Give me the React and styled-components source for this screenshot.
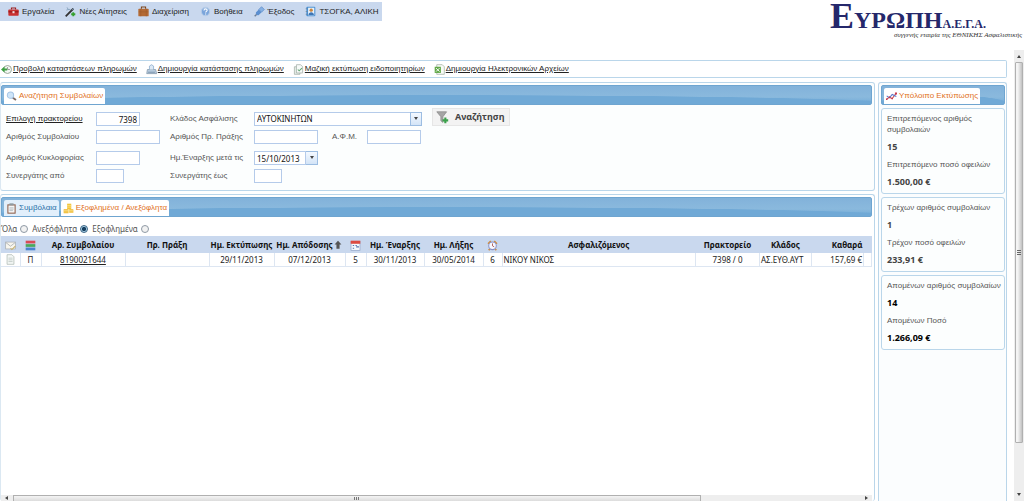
import React, { useState } from 'react';
import styled, { createGlobalStyle } from 'styled-components';

const GlobalStyle = createGlobalStyle`
  * {
    box-sizing: border-box;
  }
  body {
    margin: 0;
    background: #ffffff;
    color: #444444;
    font-family: 'Liberation Sans', Arial, sans-serif;
    font-size: 8px;
    line-height: 12px;
  }
  input, select, button {
    font: inherit;
    color: inherit;
  }
`;

const Page = styled.div`
  height: 100vh;
  display: flex;
  flex-direction: column;
  overflow: hidden;
`;

const Header = styled.header`
  height: 50px;
  flex: none;
  display: flex;
  justify-content: space-between;
  align-items: flex-start;
`;

const Menu = styled.nav`
  display: flex;
  align-items: center;
  gap: 11px;
  height: 19px;
  margin-top: 2px;
  padding: 0 3px 0 8px;
  background: #c9d8ee;
`;

const MenuItem = styled.a`
  display: flex;
  align-items: center;
  gap: 3px;
  color: #222222;
  text-decoration: none;
  white-space: nowrap;
`;

const Brand = styled.div`
  padding-right: 2px;
  color: #25286b;
  font-family: 'Liberation Serif', serif;
  text-align: right;
  white-space: nowrap;
`;

const BrandName = styled.div`
  display: flex;
  align-items: baseline;
  justify-content: flex-end;
  height: 29px;
  padding-right: 36px;
  font-size: 24px;
  font-weight: bold;
  line-height: 28px;
`;

const BrandInitial = styled.span`
  font-size: 36px;
  line-height: 32px;
`;

const BrandSuffix = styled.span`
  font-size: 12px;
`;

const Tagline = styled.div`
  color: #333333;
  font-size: 7px;
  font-style: italic;
  line-height: 12px;
`;

const Body = styled.div`
  flex: 1;
  min-height: 0;
  display: flex;
`;

const Content = styled.main`
  flex: 1;
  min-width: 0;
  display: flex;
  flex-direction: column;
  gap: 4px;
  padding: 10px 7px 0 0;
`;

const Toolbar = styled.div`
  height: 18px;
  flex: none;
  display: flex;
  align-items: center;
  gap: 9px;
  padding-left: 1px;
  border: 1px solid #bad6ea;
  border-left: none;
  border-radius: 0 2px 2px 0;
`;

const ToolLink = styled.a`
  display: flex;
  align-items: center;
  gap: 1px;
  color: #222222;
  white-space: nowrap;
`;

const Columns = styled.div`
  flex: 1;
  min-height: 0;
  display: flex;
  gap: 3px;
`;

const Main = styled.div`
  flex: 1;
  min-width: 0;
  display: flex;
  flex-direction: column;
  gap: 3px;
`;

const Panel = styled.section`
  display: flex;
  flex-direction: column;
  flex: ${props => (props.$fill ? '1' : 'none')};
  min-height: 0;
  padding: 2px 2px 0 0;
  border: 1px solid #bad6ea;
  border-left-color: #dbe8f2;
  border-bottom-width: ${props => (props.$fill ? '0' : '1px')};
  border-radius: 3px;
  background: ${props => props.$tint || '#ffffff'};
`;

const TabBar = styled.div`
  flex: none;
  display: flex;
  align-items: flex-end;
  gap: 2px;
  height: 20px;
  padding-left: 2px;
  border: 1px solid #6fa5d0;
  border-radius: 2px;
  background: radial-gradient(ellipse 55% 50% at 50% 100%, #70a9d6 95%, transparent 100%),
    linear-gradient(#82b2da, #8ab9dd 60%, #72abd7);
`;

const Tab = styled.button`
  display: flex;
  align-items: center;
  gap: 2px;
  height: 16px;
  padding: 0 2px;
  border: none;
  border-radius: 2px 2px 0 0;
  background: ${props => (props.$active ? '#ffffff' : '#e2effb')};
  color: ${props => (props.$active ? '#e17123' : '#2a6fa8')};
  white-space: nowrap;
`;

const Form = styled.form`
  display: flex;
  flex-direction: column;
  gap: 7px;
  padding: 7px 0 7px 5px;
`;

const FieldRows = styled.div`
  display: grid;
  grid-template-columns: 90px 74px 84px 78px 35px 65px auto;
  grid-auto-rows: 14px;
  row-gap: 4px;
  justify-content: start;
  align-items: center;
`;

const Label = styled.label`
  white-space: nowrap;
  color: ${props => (props.$link ? '#222222' : '#555555')};
  text-decoration: ${props => (props.$link ? 'underline' : 'none')};
`;

const Input = styled.input`
  width: ${props => props.$width}px;
  height: 14px;
  padding: 0 2px;
  border: 1px solid #b5cbea;
  border-radius: 0;
  background: #ffffff;
  color: #111111;
  font-family: 'Noto Sans', sans-serif;
  text-align: ${props => props.$align || 'left'};
  outline: none;
`;

const SelectBox = styled.div`
  position: relative;
  grid-column: 4 / 7;
  width: 168px;
  height: 14px;
`;

const Select = styled.select`
  display: block;
  width: 100%;
  height: 14px;
  padding: 0 2px;
  appearance: none;
  border: 1px solid #b5cbea;
  border-radius: 0;
  background: #ffffff;
  color: #111111;
  font-family: 'Noto Sans', sans-serif;
`;

const Arrow = styled.span`
  position: absolute;
  top: 0;
  right: 0;
  width: 12px;
  height: 14px;
  display: flex;
  align-items: center;
  justify-content: center;
  border: 1px solid #9cbde2;
  background: linear-gradient(#f4f9ff, #d3e4f7);
  pointer-events: none;
`;

const DateBox = styled.div`
  display: flex;
`;

const DateButton = styled.button`
  width: 12px;
  height: 14px;
  display: flex;
  align-items: center;
  justify-content: center;
  padding: 0;
  border: 1px solid #9cbde2;
  border-left: none;
  background: linear-gradient(#f4f9ff, #d3e4f7);
`;

const SearchButton = styled.button`
  display: flex;
  align-items: center;
  align-self: end;
  gap: 6px;
  height: 18px;
  padding: 0 5px 0 3px;
  border: 1px solid #e6e6e6;
  background: #f3f3f3;
  color: #444444;
  font-family: 'Noto Sans', sans-serif;
  font-size: 9px;
  font-weight: bold;
`;

const Filters = styled.div`
  flex: none;
  display: flex;
  align-items: center;
  gap: 4px;
  height: 12px;
  margin: 6px 0 1px;
  font-family: 'Noto Sans', sans-serif;
`;

const Option = styled.label`
  display: flex;
  align-items: center;
  gap: 3px;
  color: #555555;
  white-space: nowrap;
`;

const Radio = styled.input`
  width: 8px;
  height: 8px;
  margin: 0;
  appearance: none;
  border: 1px solid #8f9aa5;
  border-radius: 50%;
  background: #f2f2f2;

  &:checked {
    border-color: #3c6484;
    background: radial-gradient(circle, #173f5f 40%, #a9d0e8 60%);
  }
`;

const Table = styled.table`
  width: 100%;
  flex: none;
  table-layout: fixed;
  border-collapse: collapse;
  color: #222222;
  font-family: 'Noto Sans', sans-serif;
`;

const Th = styled.th`
  height: 17px;
  padding: 0 1px;
  overflow: hidden;
  background: #c9d8ee;
  color: #111111;
  font-size: 8px;
  text-align: ${props => props.$align || 'center'};
  white-space: nowrap;

  svg {
    vertical-align: middle;
  }
`;

const Td = styled.td`
  height: 13px;
  padding: 0 1px;
  overflow: hidden;
  border-right: 1px solid #dde6f2;
  border-bottom: 1px solid #dde6f2;
  line-height: 11px;
  text-align: ${props => props.$align || 'center'};
  white-space: nowrap;

  a {
    color: #222222;
  }
  svg {
    display: block;
    margin: 0 auto;
  }
`;

const Spacer = styled.div`
  flex: 1;
`;

const Side = styled.aside`
  width: 129px;
  flex: none;
  display: flex;
  flex-direction: column;
  gap: 3px;
  padding: 2px 1px 0 2px;
  border: 1px solid #bad6ea;
  border-bottom: none;
  border-radius: 3px 3px 0 0;
  background: #fbfdfe;
`;

const Card = styled.dl`
  margin: 0;
  padding: 4px 3px 5px 5px;
  border: 1px solid #bad6ea;
  border-radius: 3px;
  background: #fcfefe;
`;

const Term = styled.dt`
  margin-bottom: 6px;
  color: #555555;
  line-height: 11px;
`;

const Value = styled.dd`
  margin: 0 0 6px;
  color: ${props => (props.$dark ? '#000000' : '#444444')};
  font-family: 'Noto Sans', sans-serif;
  font-size: 9px;
  font-weight: bold;

  &:last-child {
    margin-bottom: 0;
  }
`;

const VScroll = styled.div`
  width: 10px;
  flex: none;
  display: flex;
  flex-direction: column;
  align-items: center;
  background: #eeeeee;
`;

const VThumb = styled.div`
  width: 8px;
  flex: 381;
  display: flex;
  align-items: center;
  justify-content: center;
  border: 1px solid #b0b0b0;
  border-radius: 1px;
  background: linear-gradient(90deg, #f4f4f4 30%, #c2c2c2);
`;

const VRest = styled.div`
  flex: 46;
`;

const ScrollEnd = styled.div`
  flex: none;
  height: ${props => props.$height || 12}px;
  width: 12px;
  display: flex;
  align-items: center;
  justify-content: center;
`;

const HScroll = styled.div`
  flex: none;
  display: flex;
  height: 6px;
  overflow: hidden;
  background: #eeeeee;
`;

const HThumb = styled.div`
  flex: 688;
  display: flex;
  align-items: center;
  justify-content: center;
  border: 1px solid #b0b0b0;
  border-bottom: none;
  background: linear-gradient(#f4f4f4, #dcdcdc);
`;

const HRest = styled.div`
  flex: 160;
`;

const Triangle = ({ points = '1,0 5,0 3,3' }) => (
  <svg width="6" height="4" viewBox="0 0 6 4">
    <polygon points={points} fill="#444444" />
  </svg>
);

const drawings = {
  toolbox: (
    <>
      <path d="M5 5V3h6v2" fill="none" stroke="#9b1c1c" strokeWidth="1.6" />
      <rect x="0.5" y="5" width="15" height="9" rx="1" fill="#c93131" />
      <path d="M0.5 8.5h15" stroke="#8b1313" strokeWidth="1.4" />
      <rect x="6.5" y="7.5" width="3" height="3" fill="#f3dede" />
    </>
  ),
  wand: (
    <>
      <path d="M1 15L12 4" stroke="#333333" strokeWidth="2.6" />
      <path d="M10 6l3-3M3 2l1.5 3L8 5M2 6l3-1" stroke="#7f9db8" strokeWidth="1.2" fill="none" />
      <path d="M12 9v6M9 12h6" stroke="#35a02e" strokeWidth="2.6" />
    </>
  ),
  briefcase: (
    <>
      <path d="M5 4V1.5h6V4" fill="none" stroke="#7c451c" strokeWidth="1.6" />
      <rect x="0.5" y="4" width="15" height="11" rx="1" fill="#b36a35" />
      <path d="M1 8.5h14M4 4v11M12 4v11" stroke="#9a5a2a" strokeWidth="0.8" />
    </>
  ),
  help: (
    <>
      <circle cx="8" cy="8" r="6" fill="#7ba5db" stroke="#b4cbe8" strokeWidth="1.5" />
      <path d="M5.8 6.5c0-3 4.6-3 4.6-.3 0 1.6-2.2 1.5-2.2 3.3M8.2 11v1.5" fill="none" stroke="#ffffff" strokeWidth="1.6" />
    </>
  ),
  exit: (
    <>
      <path d="M1 15l3-3" stroke="#6a7d95" strokeWidth="2" />
      <path d="M3 9l4-4 4 4-4 4c-2 1.5-5.5-2-4-4z" fill="#5b8fd0" />
      <path d="M7 5l4-4 4 4-4 4z" fill="#86b1e4" stroke="#5c89c4" />
    </>
  ),
  user: (
    <>
      <rect x="2" y="1" width="13" height="14" rx="1.5" fill="#4b90d2" />
      <rect x="4.5" y="2.5" width="9" height="11" fill="#e8f2fb" />
      <circle cx="9" cy="6" r="2.4" fill="#c9863f" />
      <path d="M5 13c0-5 8-5 8 0z" fill="#3f76b5" />
      <path d="M1 4h2.5M1 8h2.5M1 12h2.5" stroke="#6f7f8f" />
    </>
  ),
  back: (
    <>
      <circle cx="9.5" cy="8" r="5.8" fill="#f3f7f3" stroke="#97a797" strokeWidth="1.4" />
      <path d="M9.5 4.5V8H13" stroke="#777777" fill="none" />
      <path d="M0 8l5-4.5v3h4v3H5v3z" fill="#3fa044" />
    </>
  ),
  pay: (
    <>
      <path d="M2 8h12l1.5 6H1z" fill="#b5c9dc" stroke="#7d93a8" />
      <path d="M5 8V3l3-2 3 2v5" fill="#dce9f5" stroke="#7fa2c6" />
      <path d="M3 12h10" stroke="#66809a" />
    </>
  ),
  pages: (
    <>
      <path d="M2 4h8v11H2z" fill="#e7eee9" stroke="#9aa8a0" />
      <path d="M5 1h6l3 3v9H5z" fill="#f7faf8" stroke="#9aa8a0" />
      <path d="M7 8l2 2 4-4" stroke="#62a773" strokeWidth="1.5" fill="none" />
    </>
  ),
  sheet: (
    <>
      <path d="M4 1h8l3 3v11H4z" fill="#f8fbf7" stroke="#9ba99a" />
      <rect x="1" y="4" width="9" height="9" fill="#61a848" />
      <path d="M3 6l5 5M8 6l-5 5" stroke="#ffffff" strokeWidth="1.4" />
    </>
  ),
  lens: (
    <>
      <path d="M9.5 9.5L14.5 13" stroke="#7c6a63" strokeWidth="2.6" />
      <circle cx="6.5" cy="6" r="4.6" fill="#cfe5f8" stroke="#a5c5e5" strokeWidth="1.5" />
    </>
  ),
  clipboard: (
    <>
      <rect x="2" y="2" width="12" height="13.5" fill="#8c5a43" />
      <rect x="3.5" y="3.5" width="9" height="10.5" fill="#f5f6f6" />
      <rect x="5" y="0.5" width="6" height="3" fill="#8f999f" />
      <path d="M5 7h6M5 9h6M5 11h5" stroke="#a5adb3" />
    </>
  ),
  coins: (
    <>
      <path d="M6 1h6v8H6z" fill="#f4c436" />
      <path d="M1 9h7v6H1zM9 9h6v5H9z" fill="#eeb322" />
      <path d="M6 3.5h6M6 6h6M1 11h14M1 13h14" stroke="#fbe79a" />
    </>
  ),
  chart: (
    <>
      <path d="M1 12l4-3 4 2 6-8" stroke="#d04545" strokeWidth="1.5" fill="none" />
      <path d="M1 7l4 3 4-5 6 3" stroke="#5a76c8" strokeWidth="1.5" fill="none" />
      <path d="M0 11h2v2H0zM4 8h2v2H4zM8 10h2v2H8zM13 2h3v3h-3z" fill="#c23a52" />
    </>
  ),
  filter: (
    <>
      <path d="M1 1h12L8.5 7v7L6 12V7z" fill="#a5a5a5" stroke="#8c8c8c" />
      <path d="M11.5 8v7M8 11.5h7" stroke="#3ba04b" strokeWidth="2.6" />
    </>
  ),
  mail: (
    <>
      <rect x="1" y="3" width="14" height="10" fill="#f8f6ee" stroke="#a5aaae" />
      <path d="M1 3.5l7 5.5 7-5.5" fill="none" stroke="#9aa0a6" />
      <path d="M8 12l2 2 5-5" fill="none" stroke="#c8b16b" strokeWidth="1.5" />
    </>
  ),
  bars: (
    <>
      <rect x="1" y="1" width="14" height="4" fill="#d94b56" />
      <rect x="1" y="6" width="14" height="4" fill="#4ba75c" />
      <rect x="1" y="11" width="14" height="4" fill="#4a83cf" />
    </>
  ),
  calendar: (
    <>
      <rect x="1.5" y="2" width="13" height="13" fill="#f5f7fb" stroke="#8fa3c6" />
      <rect x="1" y="1" width="14" height="4.5" fill="#dc4a40" />
      <path d="M9 10h4M4 8h2M8 8h2M4 12h2" stroke="#5675ad" strokeWidth="1.6" />
    </>
  ),
  clock: (
    <>
      <path d="M1.5 5.5l4-4M14.5 5.5l-4-4M4 13l-1.5 2M12 13l1.5 2" stroke="#d08a3d" strokeWidth="2.4" />
      <circle cx="8" cy="8.5" r="5.5" fill="#f7f8ff" stroke="#8790c4" strokeWidth="1.5" />
      <path d="M8 5v3.5l2.5 1.5" stroke="#a6493f" strokeWidth="1.2" fill="none" />
    </>
  ),
  page: (
    <>
      <path d="M3 1h7l3 3v11H3z" fill="#f4f7f5" stroke="#a9b4ae" />
      <path d="M5 6h6M5 8.5h6M5 11h6" stroke="#b5c1ba" />
    </>
  ),
  up: <path d="M8 1l5.5 6h-3v7h-5V7h-3z" fill="#555555" />
};

const Icon = ({ name, size = 11 }) => (
  <svg width={size} height={size} viewBox="0 0 16 16" aria-hidden="true">
    {drawings[name]}
  </svg>
);

const menu = [
  ['toolbox', 'Εργαλεία'],
  ['wand', 'Νέες Αίτησεις'],
  ['briefcase', 'Διαχείριση'],
  ['help', 'Βοήθεια'],
  ['exit', 'Έξοδος'],
  ['user', 'ΤΣΟΓΚΑ, ΑΛΙΚΗ']
];

const tools = [
  ['back', 'Προβολή καταστάσεων πληρωμών'],
  ['pay', 'Δημιουργία κατάστασης πληρωμών'],
  ['pages', 'Μαζική εκτύπωση ειδοποιητηρίων'],
  ['sheet', 'Δημιουργία Ηλεκτρονικών Αρχείων']
];

const columns = [
  { icon: 'mail', width: 19, value: <Icon name="page" /> },
  { icon: 'bars', width: 21, value: 'Π' },
  { title: 'Αρ. Συμβολαίου', width: 84, value: <a href="#policy">8190021644</a> },
  { title: 'Πρ. Πράξη', width: 84, value: '' },
  { title: 'Ημ. Εκτύπωσης', width: 65, value: '29/11/2013' },
  { title: 'Ημ. Απόδοσης', width: 71, value: '07/12/2013', sorted: true },
  { icon: 'calendar', width: 21, value: '5' },
  { title: 'Ημ. Έναρξης', width: 58, value: '30/11/2013' },
  { title: 'Ημ. Λήξης', width: 59, value: '30/05/2014' },
  { icon: 'clock', width: 19, value: '6' },
  { title: 'Ασφαλιζόμενος', value: 'ΝΙΚΟΥ ΝΙΚΟΣ', align: 'left' },
  { title: 'Πρακτορείο', width: 64, value: '7398 / 0' },
  { title: 'Κλάδος', width: 52, value: 'ΑΣ.ΕΥΘ.ΑΥΤ', align: 'left' },
  { title: 'Καθαρά', width: 52, value: '157,69 €', align: 'right', headAlign: 'right' },
  { width: 8, value: '' }
];

const filters = ['Όλα', 'Ανεξόφλητα', 'Εξοφλημένα'];

const cards = [
  {
    rows: [
      ['Επιτρεπόμενος αριθμός συμβολαιών', '15'],
      ['Επιτρεπόμενο ποσό οφειλών', '1.500,00 €']
    ]
  },
  {
    rows: [
      ['Τρέχων αριθμός συμβολαίων', '1'],
      ['Τρέχον ποσό οφειλών', '233,91 €']
    ]
  },
  {
    dark: true,
    rows: [
      ['Απομένων αριθμός συμβολαίων', '14'],
      ['Απομένων Ποσό', '1.266,09 €']
    ]
  }
];

const SearchForm = () => (
  <Form onSubmit={e => e.preventDefault()}>
    <FieldRows>
      <Label htmlFor="agency" $link>Επιλογή πρακτορείου</Label>
      <Input id="agency" $width={44} $align="right" defaultValue="7398" />
      <Label htmlFor="branch">Κλάδος Ασφάλισης</Label>
      <SelectBox>
        <Select id="branch">
          <option>ΑΥΤΟΚΙΝΗΤΩΝ</option>
        </Select>
        <Arrow>
          <Triangle />
        </Arrow>
      </SelectBox>
      <SearchButton type="submit">
        <Icon name="filter" size={13} />
        Αναζήτηση
      </SearchButton>
      <Label htmlFor="policy">Αριθμός Συμβολαίου</Label>
      <Input id="policy" $width={64} />
      <Label htmlFor="act">Αριθμός Πρ. Πράξης</Label>
      <Input id="act" $width={64} />
      <Label htmlFor="vat">Α.Φ.Μ.</Label>
      <Input id="vat" $width={54} />
    </FieldRows>
    <FieldRows>
      <Label htmlFor="plate">Αριθμός Κυκλοφορίας</Label>
      <Input id="plate" $width={44} />
      <Label htmlFor="start">Ημ.Έναρξης μετά τις</Label>
      <DateBox>
        <Input id="start" $width={52} defaultValue="15/10/2013" />
        <DateButton type="button" aria-label="Ημερομηνία">
          <Triangle />
        </DateButton>
      </DateBox>
      <span />
      <span />
      <span />
      <Label htmlFor="from">Συνεργάτης από</Label>
      <Input id="from" $width={28} />
      <Label htmlFor="to">Συνεργάτης έως</Label>
      <Input id="to" $width={28} />
    </FieldRows>
  </Form>
);

const Policies = () => (
  <Table>
    <colgroup>
      {columns.map((c, i) => (
        <col key={i} width={c.width} />
      ))}
    </colgroup>
    <thead>
      <tr>
        {columns.map((c, i) => (
          <Th key={i} $align={c.headAlign}>
            {c.icon ? <Icon name={c.icon} /> : c.title}
            {c.sorted && <Icon name="up" size={10} />}
          </Th>
        ))}
      </tr>
    </thead>
    <tbody>
      <tr>
        {columns.map((c, i) => (
          <Td key={i} $align={c.align}>{c.value}</Td>
        ))}
      </tr>
    </tbody>
  </Table>
);

const App = () => {
  const [filter, setFilter] = useState('Ανεξόφλητα');

  return (
    <Page>
      <GlobalStyle />
      <Header>
        <Menu>
          {menu.map(([icon, text]) => (
            <MenuItem key={text} href="#menu">
              <Icon name={icon} />
              {text}
            </MenuItem>
          ))}
        </Menu>
        <Brand>
          <BrandName>
            <BrandInitial>Ε</BrandInitial>
            <span>ΥΡΩΠΗ</span>
            <BrandSuffix>Α.Ε.Γ.Α.</BrandSuffix>
          </BrandName>
          <Tagline>συγγενής εταιρία της ΕΘΝΙΚΗΣ Ασφαλιστικής</Tagline>
        </Brand>
      </Header>
      <Body>
        <Content>
          <Toolbar>
            {tools.map(([icon, text]) => (
              <ToolLink key={text} href="#tool">
                <Icon name={icon} />
                {text}
              </ToolLink>
            ))}
          </Toolbar>
          <Columns>
            <Main>
              <Panel $tint="#fcfefe">
                <TabBar>
                  <Tab $active>
                    <Icon name="lens" />
                    Αναζήτηση Συμβολαίων
                  </Tab>
                </TabBar>
                <SearchForm />
              </Panel>
              <Panel $fill>
                <TabBar>
                  <Tab>
                    <Icon name="clipboard" />
                    Συμβόλαια
                  </Tab>
                  <Tab $active>
                    <Icon name="coins" />
                    Εξοφλημένα / Ανεξόφλητα
                  </Tab>
                </TabBar>
                <Filters>
                  {filters.map(name => (
                    <Option key={name}>
                      {name}
                      <Radio
                        type="radio"
                        name="filter"
                        checked={filter === name}
                        onChange={() => setFilter(name)}
                      />
                    </Option>
                  ))}
                </Filters>
                <Policies />
                <Spacer />
                <HScroll>
                  <ScrollEnd $height={6}>
                    <Triangle points="4,0 4,4 1,2" />
                  </ScrollEnd>
                  <HThumb>
                    <svg width="5" height="3" viewBox="0 0 5 3">
                      <path d="M0.5 0v3M2.5 0v3M4.5 0v3" stroke="#777777" />
                    </svg>
                  </HThumb>
                  <HRest />
                  <ScrollEnd $height={6}>
                    <Triangle points="2,0 2,4 5,2" />
                  </ScrollEnd>
                </HScroll>
              </Panel>
            </Main>
            <Side>
              <TabBar>
                <Tab $active>
                  <Icon name="chart" />
                  Υπόλοιπο Εκτύπωσης
                </Tab>
              </TabBar>
              {cards.map((card, i) => (
                <Card key={i}>
                  {card.rows.map(([term, value]) => (
                    <React.Fragment key={term}>
                      <Term>{term}</Term>
                      <Value $dark={card.dark}>{value}</Value>
                    </React.Fragment>
                  ))}
                </Card>
              ))}
            </Side>
          </Columns>
        </Content>
        <VScroll>
          <ScrollEnd>
            <Triangle points="1,4 5,4 3,1" />
          </ScrollEnd>
          <VThumb>
            <svg width="4" height="5" viewBox="0 0 4 5">
              <path d="M0 0.5h4M0 2.5h4M0 4.5h4" stroke="#666666" />
            </svg>
          </VThumb>
          <VRest />
          <ScrollEnd>
            <Triangle />
          </ScrollEnd>
        </VScroll>
      </Body>
    </Page>
  );
};

export default App;
